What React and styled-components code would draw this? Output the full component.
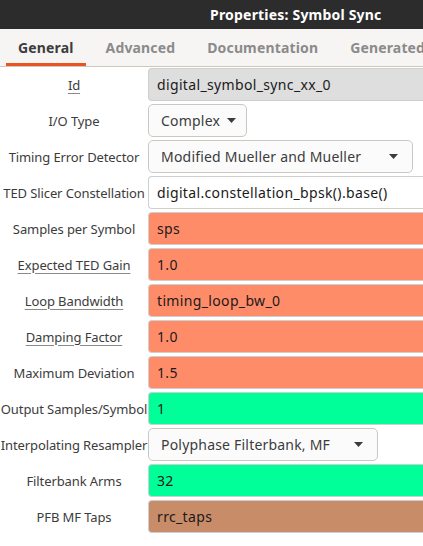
import React from "react";
import styled, { createGlobalStyle } from "styled-components";

const Global = createGlobalStyle`
  html, body { margin: 0; padding: 0; background: #ffffff; overflow: hidden; }
  body { font-family: "Noto Sans", "DejaVu Sans", sans-serif; }
`;

const Window = styled.div`
  width: 440px;
  height: 546px;
  background: #ffffff;
  display: flex;
  flex-direction: column;
`;

const TitleBar = styled.div`
  height: 29px;
  background: #2c2c2c;
  color: #ffffff;
  font-weight: 700;
  font-size: 14px;
  display: flex;
  align-items: center;
  padding-left: 210px;
  letter-spacing: 0.2px;
`;

const TabBar = styled.div`
  height: 38px;
  background: #f6f5f4;
  border-bottom: 1px solid #cdc7c2;
  display: flex;
  gap: 8px;
  padding-left: 6px;
  box-sizing: border-box;
`;

const Tab = styled.div`
  padding: 0 12px;
  display: flex;
  align-items: center;
  font-size: 14px;
  font-weight: 700;
  color: ${(p) => (p.$active ? "#3d3d3d" : "#8b8b8b")};
  box-shadow: ${(p) => (p.$active ? "inset 0 -3px 0 #e95420" : "none")};
  white-space: nowrap;
  letter-spacing: 0.15px;
`;

const Rows = styled.div`
  display: flex;
  flex-direction: column;
  gap: 3px;
  padding-top: 1px;
`;

const Row = styled.div`
  display: flex;
  align-items: center;
  height: 33px;
`;

const Label = styled.div`
  width: 148px;
  flex: none;
  text-align: center;
  font-size: 13px;
  color: #3c3c3c;
  white-space: nowrap;
  letter-spacing: -0.1px;
  span {
    text-decoration: ${(p) => (p.$link ? "underline" : "none")};
    text-decoration-color: #8a8a8a;
    text-underline-offset: 3px;
  }
`;

const Entry = styled.div`
  flex: 1;
  height: 33px;
  box-sizing: border-box;
  background: ${(p) => p.$bg};
  border: 1px solid #cfcfcf;
  border-right: none;
  border-radius: 4px 0 0 4px;
  display: flex;
  align-items: center;
  padding-left: 8px;
  font-size: 14px;
  color: #1a1a1a;
  letter-spacing: 0.35px;
  white-space: nowrap;
`;

const Combo = styled.div`
  width: ${(p) => p.$w}px;
  flex: none;
  height: 33px;
  box-sizing: border-box;
  background: #fbfbfb;
  border: 1px solid #cdc7c2;
  border-radius: 5px;
  display: flex;
  align-items: center;
  justify-content: ${(p) => (p.$tight ? "flex-start" : "space-between")};
  gap: 7px;
  padding: 0 14px 0 12px;
  font-size: 14px;
  color: #3c3c3c;
  letter-spacing: 0.2px;
  white-space: nowrap;
  svg { flex: none; }
`;

const Arrow = () => (
  <svg width="9" height="5" viewBox="0 0 9 5">
    <path d="M0 0 L9 0 L4.5 5 Z" fill="#3c3c3c" />
  </svg>
);

const SALMON = "#ff8c69";
const GREEN = "#00ff99";

const rows = [
  { label: "Id", link: true, type: "entry", bg: "#dedede", value: "digital_symbol_sync_xx_0" },
  { label: "I/O Type", type: "combo", w: 99, tight: true, value: "Complex" },
  { label: "Timing Error Detector", type: "combo", w: 265, value: "Modified Mueller and Mueller" },
  { label: "TED Slicer Constellation", type: "entry", bg: "#ffffff", value: "digital.constellation_bpsk().base()" },
  { label: "Samples per Symbol", type: "entry", bg: SALMON, value: "sps" },
  { label: "Expected TED Gain", link: true, type: "entry", bg: SALMON, value: "1.0" },
  { label: "Loop Bandwidth", link: true, type: "entry", bg: SALMON, value: "timing_loop_bw_0" },
  { label: "Damping Factor", link: true, type: "entry", bg: SALMON, value: "1.0" },
  { label: "Maximum Deviation", type: "entry", bg: SALMON, value: "1.5" },
  { label: "Output Samples/Symbol", type: "entry", bg: GREEN, value: "1" },
  { label: "Interpolating Resampler", type: "combo", w: 230, value: "Polyphase Filterbank, MF" },
  { label: "Filterbank Arms", type: "entry", bg: GREEN, value: "32" },
  { label: "PFB MF Taps", type: "entry", bg: "#c98c69", value: "rrc_taps" },
];

export default function App() {
  return (
    <Window>
      <Global />
      <TitleBar>Properties: Symbol Sync</TitleBar>
      <TabBar>
        <Tab $active>General</Tab>
        <Tab>Advanced</Tab>
        <Tab>Documentation</Tab>
        <Tab>Generated</Tab>
      </TabBar>
      <Rows>
        {rows.map((r) => (
          <Row key={r.label}>
            <Label $link={r.link}>
              <span>{r.label}</span>
            </Label>
            {r.type === "entry" ? (
              <Entry $bg={r.bg}>{r.value}</Entry>
            ) : (
              <Combo $w={r.w} $tight={r.tight}>
                <span>{r.value}</span>
                <Arrow />
              </Combo>
            )}
          </Row>
        ))}
      </Rows>
    </Window>
  );
}
